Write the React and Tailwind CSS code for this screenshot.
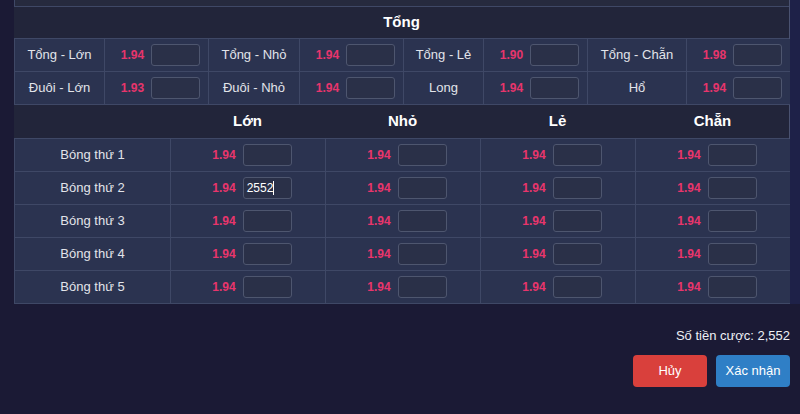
import React from "react";

const font = { fontFamily: '"Liberation Sans", Arial, sans-serif' };

function Odd({ v, val }) {
  return (
    <div className="flex items-center justify-center gap-[7px] pl-[8px]">
      <span className="text-[12px] font-bold text-[#e8356c]">{v}</span>
      <div className="w-[49px] h-[22px] rounded-[3px] border border-[#4e566f] bg-[#2a3048] flex items-center px-[3px] text-[12px] text-white">
        {val}
        {val ? <span className="w-px h-[14px] bg-white" /> : null}
      </div>
    </div>
  );
}

const t1 = [
  [["Tổng - Lớn", "1.94"], ["Tổng - Nhỏ", "1.94"], ["Tổng - Lẻ", "1.90"], ["Tổng - Chẵn", "1.98"]],
  [["Đuôi - Lớn", "1.93"], ["Đuôi - Nhỏ", "1.94"], ["Long", "1.94"], ["Hổ", "1.94"]],
];

export default function App() {
  return (
    <div className="w-[800px] h-[414px] bg-[#1b1a35] overflow-hidden text-white" style={font}>
      <div className="flex">
        <div className="w-[14px] shrink-0" />
        <div className="w-[776px] bg-[#22253a] border-r border-[#4a5270]">
          <div className="h-[7px] bg-[#262a3e] border-l border-b border-[#3f4866]" />
          <div className="h-[31px] flex items-center justify-center text-[15px] font-bold">Tổng</div>
          <div className="grid grid-cols-[90px_104px_91px_104px_80px_104px_99px_104px] border-t border-l border-[#3f4866]">
            {t1.map((row, ri) =>
              row.map(([l, v], ci) => (
                <React.Fragment key={ri + "-" + ci}>
                  <div className="h-[33px] bg-[#2b3350] border-r border-b border-[#3f4866] flex items-center justify-center text-[13px] text-[#e2e4ea]">{l}</div>
                  <div className="h-[33px] bg-[#2b3350] border-r border-b border-[#3f4866] flex items-center justify-center">
                    <Odd v={v} />
                  </div>
                </React.Fragment>
              ))
            )}
          </div>
          <div className="grid grid-cols-[156px_155px_155px_155px_155px] h-[33px] items-center text-[15px] font-bold">
            <div />
            <div className="text-center">Lớn</div>
            <div className="text-center">Nhỏ</div>
            <div className="text-center">Lẻ</div>
            <div className="text-center">Chẵn</div>
          </div>
          <div className="grid grid-cols-[156px_155px_155px_155px_155px] border-t border-l border-[#3f4866]">
            {[1, 2, 3, 4, 5].map((n) => (
              <React.Fragment key={n}>
                <div className="h-[33px] bg-[#2b3350] border-r border-b border-[#3f4866] flex items-center justify-center text-[13px] text-[#e2e4ea]">Bóng thứ {n}</div>
                {[0, 1, 2, 3].map((c) => (
                  <div key={c} className="h-[33px] bg-[#2b3350] border-r border-b border-[#3f4866] flex items-center justify-center">
                    <Odd v="1.94" val={n === 2 && c === 0 ? "2552" : ""} />
                  </div>
                ))}
              </React.Fragment>
            ))}
          </div>
        </div>
        <div className="flex-1 bg-[#1e2148]" />
      </div>
      <div className="w-[790px] flex flex-col items-end">
        <div className="mt-[22px] text-[13px] text-[#eef0f5]">Số tiền cược: 2,552</div>
        <div className="mt-[9px] flex gap-[9px]">
          <button className="w-[74px] h-[32px] rounded-[4px] bg-[#d9403c] text-[13px] text-white">Hủy</button>
          <button className="w-[74px] h-[32px] rounded-[4px] bg-[#2f7fc6] text-[13px] text-white">Xác nhận</button>
        </div>
      </div>
    </div>
  );
}
